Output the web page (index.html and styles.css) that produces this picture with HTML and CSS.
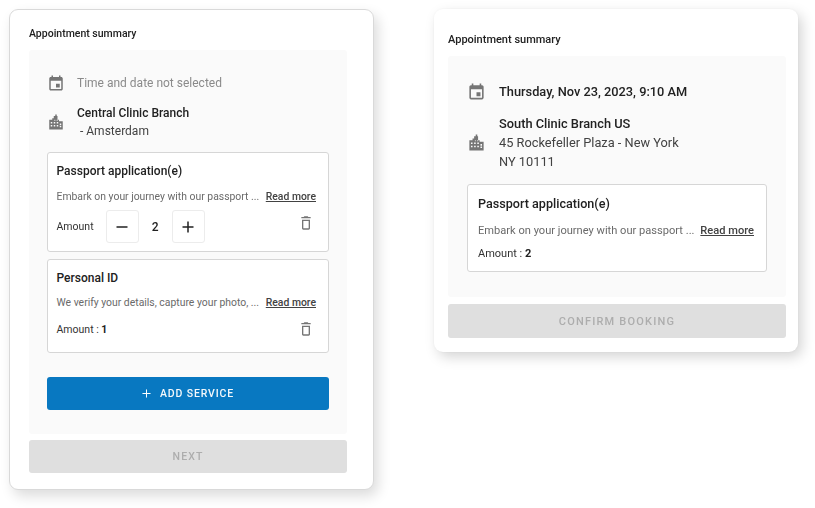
FILE: index.html
```html
<!DOCTYPE html>
<html lang="en">
<head>
<meta charset="utf-8">
<title>Appointment summary</title>
<link rel="stylesheet" href="styles.css">
</head>
<body>
<svg class="defs" width="0" height="0" aria-hidden="true">
  <symbol id="i-cal" viewBox="0 0 24 24"><path d="M19 4h-1V2h-2v2H8V2H6v2H5C3.9 4 3 4.9 3 6v14c0 1.1.9 2 2 2h14c1.100 0 2-.9 2-2V6c0-1.100-.9-2-2-2zm0 16H5V9h14v11zm-7-7h5v5h-5z"/></symbol>
  <symbol id="i-city" viewBox="0 0 24 24"><path d="M11 2h2v2h1v5h2v2h5v11H3V9h4V7h2V4h2V2zM5 12v2h2v-2H5zm0 4v2h2v-2H5zm4-4v2h2v-2H9zm0 4v2h2v-2H9zm4-4v2h2v-2h-2zm0 4v2h2v-2h-2zm4-2v2h2v-2h-2zm0 3v2h2v-2h-2zM10 9v1.500h1V9h-1zm3 0v1.500h1V9h-1z"/></symbol>
  <symbol id="i-trash" viewBox="0 0 24 24"><path d="M15.500 3l-1-1h-5l-1 1H5v2h14V3h-3.500zM6 7v13c0 1.100.9 2 2 2h8c1.100 0 2-.9 2-2V7H6zm2 2h8v11H8V9z"/></symbol>
</svg>

<section class="card card-left">
  <h2 class="title">Appointment summary</h2>
  <div class="panel">
    <div class="row row-date">
      <svg class="icon"><use href="#i-cal"/></svg>
      <span class="muted">Time and date not selected</span>
    </div>
    <div class="row row-place">
      <svg class="icon"><use href="#i-city"/></svg>
      <div class="place">
        <div class="place-name">Central Clinic Branch</div>
        <div class="place-line indent">- Amsterdam</div>
      </div>
    </div>
    <article class="service service-first">
      <h3 class="service-name">Passport application(e)</h3>
      <div class="desc"><span class="desc-text">Embark on your journey with our passport ...</span><a class="more">Read more</a></div>
      <div class="amount-row">
        <span class="amount-label">Amount</span>
        <span class="stepper">
          <span class="step"><svg viewBox="0 0 12 12"><path d="M0.500 6h11"/></svg></span>
          <span class="qty">2</span>
          <span class="step"><svg viewBox="0 0 12 12"><path d="M0.500 6h11M6 0.500v11"/></svg></span>
        </span>
        <svg class="trash"><use href="#i-trash"/></svg>
      </div>
    </article>
    <article class="service service-second">
      <h3 class="service-name">Personal ID</h3>
      <div class="desc"><span class="desc-text">We verify your details, capture your photo, ...</span><a class="more">Read more</a></div>
      <div class="amount-row amount-plain">
        <span class="amount-label">Amount : <b>1</b></span>
        <svg class="trash"><use href="#i-trash"/></svg>
      </div>
    </article>
    <button class="add" type="button"><svg viewBox="0 0 10 10"><path d="M0.500 5h9M5 0.500v9"/></svg>ADD SERVICE</button>
  </div>
  <button class="disabled" type="button">NEXT</button>
</section>

<section class="card card-right">
  <h2 class="title">Appointment summary</h2>
  <div class="panel">
    <div class="row row-date">
      <svg class="icon"><use href="#i-cal"/></svg>
      <span class="date">Thursday, Nov 23, 2023, 9:10 AM</span>
    </div>
    <div class="row row-place">
      <svg class="icon"><use href="#i-city"/></svg>
      <div class="place">
        <div class="place-name">South Clinic Branch US</div>
        <div class="place-line">45 Rockefeller Plaza - New York</div>
        <div class="place-line">NY 10111</div>
      </div>
    </div>
    <article class="service">
      <h3 class="service-name">Passport application(e)</h3>
      <div class="desc"><span class="desc-text">Embark on your journey with our passport ...</span><a class="more">Read more</a></div>
      <div class="amount-label amount-static">Amount : <b>2</b></div>
    </article>
  </div>
  <button class="disabled" type="button">CONFIRM BOOKING</button>
</section>
</body>
</html>
```
FILE: styles.css
```css
* { box-sizing: border-box; }

html, body { height: 100%; }

body {
  margin: 0;
  padding: 9px 0 0 9px;
  background: #fff;
  display: flex;
  align-items: flex-start;
  gap: 60px;
  overflow: hidden;
  font-family: Roboto, "Liberation Sans", sans-serif;
  color: #212121;
}

.defs { position: absolute; }

.card {
  flex: none;
  background: #fff;
  border-radius: 9px;
  display: flex;
  flex-direction: column;
  filter: blur(.35px);
}

.card-left {
  width: 365px;
  height: 481px;
  padding: 0 26px 0 19px;
  border: 1px solid #d9d9d9;
  box-shadow: 4px 6px 13px rgba(0, 0, 0, .14);
}

.card-right {
  width: 364px;
  height: 343px;
  padding: 0 12px 0 14px;
  box-shadow: 4px 5px 13px rgba(0, 0, 0, .17), 0 0 3px rgba(0, 0, 0, .05);
}

.title {
  margin: 0;
  font-size: 10.500px;
  font-weight: 500;
  line-height: 14px;
}

.card-left .title { padding-top: 17px; height: 40px; }
.card-right .title { padding-top: 24px; height: 47px; font-size: 11px; }

.panel {
  background: #fafafa;
  border-radius: 3px;
  display: flex;
  flex-direction: column;
}

.card-left .panel { height: 384px; padding: 0 18px; }
.card-right .panel { height: 241px; padding: 0 19px; }

.row {
  display: flex;
  align-items: center;
  color: #757575;
}

.icon { width: 18px; height: 18px; flex: none; fill: #757575; }

.card-left .icon { margin: 0 12px 0 0; }
.card-right .icon { margin: 0 13px 0 0; width: 19px; height: 19px; }

.card-left .row-date { padding-top: 24px; height: 42px; }
.card-left .row-place { margin-top: 11px; height: 38px; }
.card-right .row-date { padding-top: 26px; height: 45px; }
.card-right .row-place { margin-top: 12px; height: 58px; }

.muted { font-size: 12px; color: #8a8a8a; }

.date { font-size: 12.800px; font-weight: 500; color: #212121; }

.place { color: #424242; }

.place-name { font-weight: 500; color: #212121; }

.card-left .place-name, .card-left .place-line { font-size: 12px; line-height: 18px; }
.card-right .place-name, .card-right .place-line { font-size: 12.800px; line-height: 19px; }

.indent { padding-left: 3px; }

.service {
  background: #fff;
  border: 1px solid #d6d6d6;
  border-radius: 3px;
}

.card-left .service { padding: 0 12px 0 8.500px; }
.card-right .service { height: 88px; margin-top: 13px; padding: 0 12px 0 10px; }

.service-first { height: 100px; margin-top: 11px; }
.service-second { height: 94px; margin-top: 7px; }

.service-name {
  margin: 0;
  font-size: 12px;
  font-weight: 500;
  line-height: 16px;
  padding-top: 10px;
  height: 30px;
}

.service-second .service-name { height: 29px; }

.card-right .service-name { font-size: 12.600px; padding-top: 11px; height: 32px; }

.desc {
  display: flex;
  justify-content: space-between;
  align-items: center;
  height: 27px;
  font-size: 10.400px;
  white-space: nowrap;
}

.card-right .desc { font-size: 11.100px; height: 27px; }

.desc-text { color: #6a6a6a; }

.more { color: #424242; text-decoration: underline; font-weight: 500; }

.amount-row {
  display: flex;
  align-items: center;
  font-size: 10.500px;
  height: 33px;
}

.amount-label { font-size: 10.500px; color: #333; }
.amount-label b { font-weight: 700; color: #212121; }

.amount-plain { height: 26px; }

.amount-static { font-size: 11px; line-height: 15px; margin-top: 2px; }

.stepper {
  display: flex;
  align-items: center;
  margin-left: 12px;
}

.step {
  width: 33px;
  height: 33px;
  border: 1px solid #ececec;
  border-radius: 3px;
  background: #fff;
  display: flex;
  align-items: center;
  justify-content: center;
}

.step svg { width: 12px; height: 12px; fill: none; stroke: #212121; stroke-width: 1.500; }

.qty { width: 33px; text-align: center; font-size: 12px; font-weight: 500; }

.trash {
  width: 16px;
  height: 16px;
  fill: #757575;
  margin-left: auto;
  margin-right: 2px;
  margin-top: -7px;
}

.amount-plain .trash { margin-top: 0; }

button {
  border: 0;
  font-family: inherit;
  display: flex;
  align-items: center;
  justify-content: center;
  border-radius: 3px;
  font-weight: 500;
  letter-spacing: 1.100px;
  font-size: 10.500px;
}

.add {
  height: 33px;
  margin-top: 24px;
  flex: none;
  width: 100%;
  background: #0878c1;
  color: #f4f8fb;
  gap: 9px;
  letter-spacing: .85px;
}

.add svg { width: 9px; height: 9px; fill: none; stroke: #fff; stroke-width: 1.100; }

.disabled {
  margin-top: 6px;
  height: 34px;
  background: #dfdfdf;
  color: #adadad;
  flex: none;
}

.card-left .disabled { height: 33px; }
.card-right .disabled { margin-top: 7px; font-size: 11px; letter-spacing: 1.200px; }
```
